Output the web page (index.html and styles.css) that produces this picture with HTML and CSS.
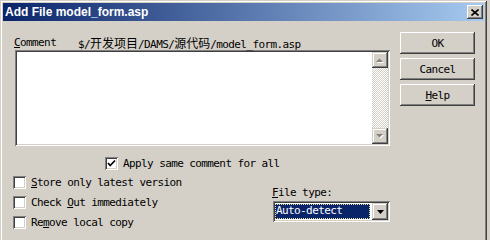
FILE: index.html
```html
<!DOCTYPE html>
<html lang="en">
<head>
    <meta charset="UTF-8">
    <title>Add File model_form.asp</title>
    <link rel="stylesheet" href="styles.css">
</head>
<body>
    <div class="window">
        <div class="titlebar">
            <span class="title">Add File model_form.asp</span>
            <span class="close">
                <svg width="8" height="7" viewBox="0 0 8 7"><path d="M0.5 0.5 L7.5 6.5 M7.5 0.5 L0.5 6.5" stroke="#000" stroke-width="1.6"/></svg>
            </span>
        </div>
        <div class="content">
            <div class="left">
                <div class="comment-row">
                    <span class="label"><u>C</u>omment</span>
                    <span class="path">$/<span class="cjk">开发项目</span>/DAMS/<span class="cjk">源代码</span>/model_form.asp</span>
                </div>
                <div class="memo">
                    <div class="memo-text"></div>
                    <div class="scrollbar">
                        <span class="sb-btn">
                            <svg width="8" height="5" viewBox="0 0 8 5"><path d="M4.5 1.5 L8 5 L1 5 Z" fill="#fff"/><path d="M3.5 0.5 L7 4 L0 4 Z" fill="#808080"/></svg>
                        </span>
                        <span class="sb-track"></span>
                        <span class="sb-btn">
                            <svg width="8" height="5" viewBox="0 0 8 5"><path d="M1 1 L8 1 L4.5 4.5 Z" fill="#fff"/><path d="M0 0 L7 0 L3.5 3.5 Z" fill="#808080"/></svg>
                        </span>
                    </div>
                </div>
                <div class="apply-row">
                    <span class="check">
                        <svg width="9" height="9" viewBox="0 0 9 9"><path d="M1 4 L3.2 6.5 L8 1.5" fill="none" stroke="#000" stroke-width="1.7"/></svg>
                    </span>
                    <span>Apply same comment for all</span>
                </div>
                <div class="bottom">
                    <div class="options">
                        <div class="option"><span class="check"></span><span><u>S</u>tore only latest version</span></div>
                        <div class="option"><span class="check"></span><span>Check <u>O</u>ut immediately</span></div>
                        <div class="option"><span class="check"></span><span>Re<u>m</u>ove local copy</span></div>
                    </div>
                    <div class="filetype">
                        <div class="ft-label"><u>F</u>ile type:</div>
                        <div class="combo">
                            <span class="combo-value">Auto-detect</span>
                            <span class="combo-btn">
                                <svg width="7" height="4" viewBox="0 0 7 4"><path d="M0 0 L7 0 L3.5 4 Z" fill="#000"/></svg>
                            </span>
                        </div>
                    </div>
                </div>
            </div>
            <div class="buttons">
                <button class="btn">OK</button>
                <button class="btn">Cancel</button>
                <button class="btn"><u>H</u>elp</button>
            </div>
        </div>
    </div>
</body>
</html>
```

FILE: styles.css
```css
body {
    margin: 0;
    background-color: #d4d0c8;
    font-family: "DejaVu Sans Mono", "Noto Sans CJK SC", monospace;
    font-size: 11px;
    letter-spacing: -0.6px;
    color: #000;
    overflow: hidden;
}
u {
    text-underline-offset: 1px;
}
.window {
    width: 487px;
    height: 246px;
    box-sizing: border-box;
    padding: 3px;
    background-color: #d4d0c8;
    box-shadow: inset 1px 1px #d4d0c8, inset -1px -1px #404040, inset 2px 2px #fff, inset -2px -2px #808080;
}
.titlebar {
    height: 18px;
    display: flex;
    align-items: center;
    justify-content: space-between;
    padding: 0 1px 0 2px;
    background: linear-gradient(to right, #0a246a, #a6caf0);
}
.title {
    font-family: "Liberation Sans", Arial, sans-serif;
    font-weight: bold;
    font-size: 12px;
    letter-spacing: 0;
    color: #fff;
}
.close {
    width: 16px;
    height: 14px;
    box-sizing: border-box;
    display: flex;
    align-items: center;
    justify-content: center;
    background-color: #d4d0c8;
    box-shadow: inset -1px -1px #404040, inset 1px 1px #fff, inset -2px -2px #808080;
}
.content {
    display: flex;
    padding: 11px 0 0 10px;
}
.left {
    width: 377px;
}
.comment-row {
    margin-top: 2px;
    height: 16px;
    display: flex;
    align-items: center;
    padding-left: 1px;
}
.label {
    width: 64px;
}
.cjk {
    font-family: "Noto Sans CJK SC", sans-serif;
    font-size: 12px;
    letter-spacing: 0;
}
.memo {
    margin-left: 2px;
    width: 375px;
    height: 96px;
    box-sizing: border-box;
    padding: 2px;
    display: flex;
    background-color: #fff;
    box-shadow: inset 1px 1px #808080, inset -1px -1px #fff, inset 2px 2px #404040, inset -2px -2px #d4d0c8;
}
.memo-text {
    flex: 1;
}
.scrollbar {
    width: 16px;
    display: flex;
    flex-direction: column;
}
.sb-btn {
    height: 16px;
    display: flex;
    align-items: center;
    justify-content: center;
    background-color: #d4d0c8;
    box-shadow: inset -1px -1px #404040, inset 1px 1px #d4d0c8, inset -2px -2px #808080, inset 2px 2px #fff;
}
.sb-track {
    flex: 1;
    background: repeating-conic-gradient(#d4d0c8 0 25%, #fff 0 50%) 0 0 / 2px 2px;
}
.apply-row {
    margin-top: 11px;
    padding-left: 92px;
    height: 13px;
    line-height: 13px;
    display: flex;
    align-items: center;
    gap: 5px;
}
.check {
    width: 13px;
    height: 13px;
    box-sizing: border-box;
    display: flex;
    align-items: center;
    justify-content: center;
    flex-shrink: 0;
    background-color: #fff;
    box-shadow: inset 1px 1px #808080, inset -1px -1px #fff, inset 2px 2px #404040, inset -2px -2px #d4d0c8;
}
.bottom {
    display: flex;
    margin-top: 6px;
}
.options {
    width: 259px;
    display: flex;
    flex-direction: column;
}
.option {
    height: 20px;
    line-height: 13px;
    display: flex;
    align-items: flex-start;
    gap: 5px;
}
.filetype {
    padding-top: 10px;
}
.ft-label {
    line-height: 13px;
}
.combo {
    margin: 2px 0 0 1px;
    width: 117px;
    height: 21px;
    box-sizing: border-box;
    padding: 2px;
    display: flex;
    background-color: #fff;
    box-shadow: inset 1px 1px #808080, inset -1px -1px #fff, inset 2px 2px #404040, inset -2px -2px #d4d0c8;
}
.combo-value {
    flex: 1;
    margin: 1px 2px 1px 0;
    padding-left: 1px;
    line-height: 13px;
    color: #fff;
    background-color: #0a246a;
    outline: 1px dotted #e8e4a0;
    outline-offset: -1px;
}
.combo-btn {
    width: 16px;
    display: flex;
    align-items: center;
    justify-content: center;
    background-color: #d4d0c8;
    box-shadow: inset -1px -1px #404040, inset 1px 1px #d4d0c8, inset -2px -2px #808080, inset 2px 2px #fff;
}
.buttons {
    margin-left: 10px;
    display: flex;
    flex-direction: column;
    gap: 4px;
}
.btn {
    width: 75px;
    height: 22px;
    padding: 0;
    border: none;
    font-family: inherit;
    font-size: 11px;
    letter-spacing: -0.6px;
    color: #000;
    background-color: #d4d0c8;
    box-shadow: inset -1px -1px #404040, inset 1px 1px #fff, inset -2px -2px #808080, inset 2px 2px #d4d0c8;
}
```
